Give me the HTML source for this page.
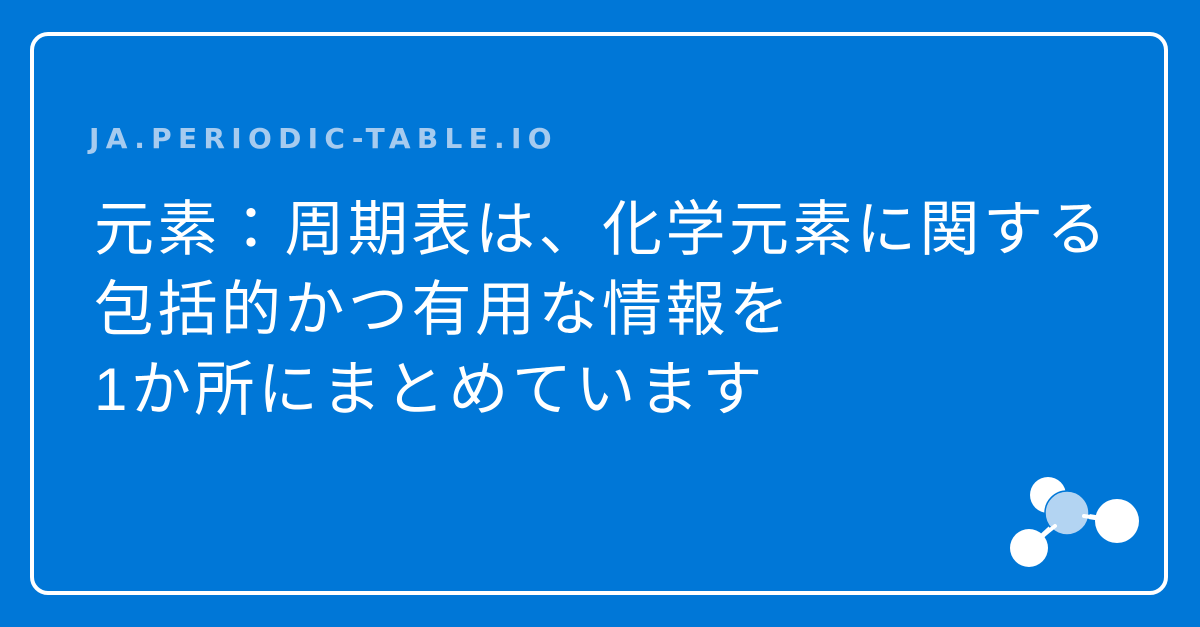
<!DOCTYPE html>
<html><head><meta charset="utf-8"><style>
html,body{margin:0;padding:0}
body{width:1200px;height:627px;background:#0077d7;position:relative;overflow:hidden}
.card{position:absolute;left:30px;top:32px;width:1130px;height:555px;border:4px solid #fff;border-radius:18px}
.lab{position:absolute;left:89px;top:122px;font:bold 28px "DejaVu Sans","Liberation Sans",sans-serif;letter-spacing:6.3px;color:#a6cbef;white-space:nowrap}
.t{position:absolute;left:94px;top:190px;font-family:"Liberation Sans","Noto Sans CJK JP",sans-serif;font-size:60px;line-height:80px;letter-spacing:3.5px;color:#fff;white-space:nowrap}
svg{position:absolute;left:0;top:0}
</style></head><body>
<div class="card"></div>
<div class="lab">JA.PERIODIC-TABLE.IO</div>
<div class="t">元素：周期表は、化学元素に関する<br>包括的かつ有用な情報を<br>1か所にまとめています</div>
<svg width="1200" height="627">
<line x1="1029" y1="548" x2="1067" y2="513" stroke="#fff" stroke-width="5"/>
<line x1="1067" y1="513" x2="1117" y2="521" stroke="#fff" stroke-width="5"/>
<circle cx="1048" cy="495" r="18" fill="#fff"/>
<circle cx="1029" cy="548" r="19" fill="#fff"/>
<circle cx="1117" cy="521" r="22" fill="#fff"/>
<circle cx="1067" cy="513" r="22" fill="#b3d4f2" stroke="#0077d7" stroke-width="1.5"/>
<line x1="1055" y1="526" x2="1040" y2="538" stroke="#fff" stroke-width="4" stroke-linecap="round"/>
<line x1="1084" y1="516" x2="1097" y2="518" stroke="#fff" stroke-width="4" stroke-linecap="round"/>
</svg>
</body></html>
